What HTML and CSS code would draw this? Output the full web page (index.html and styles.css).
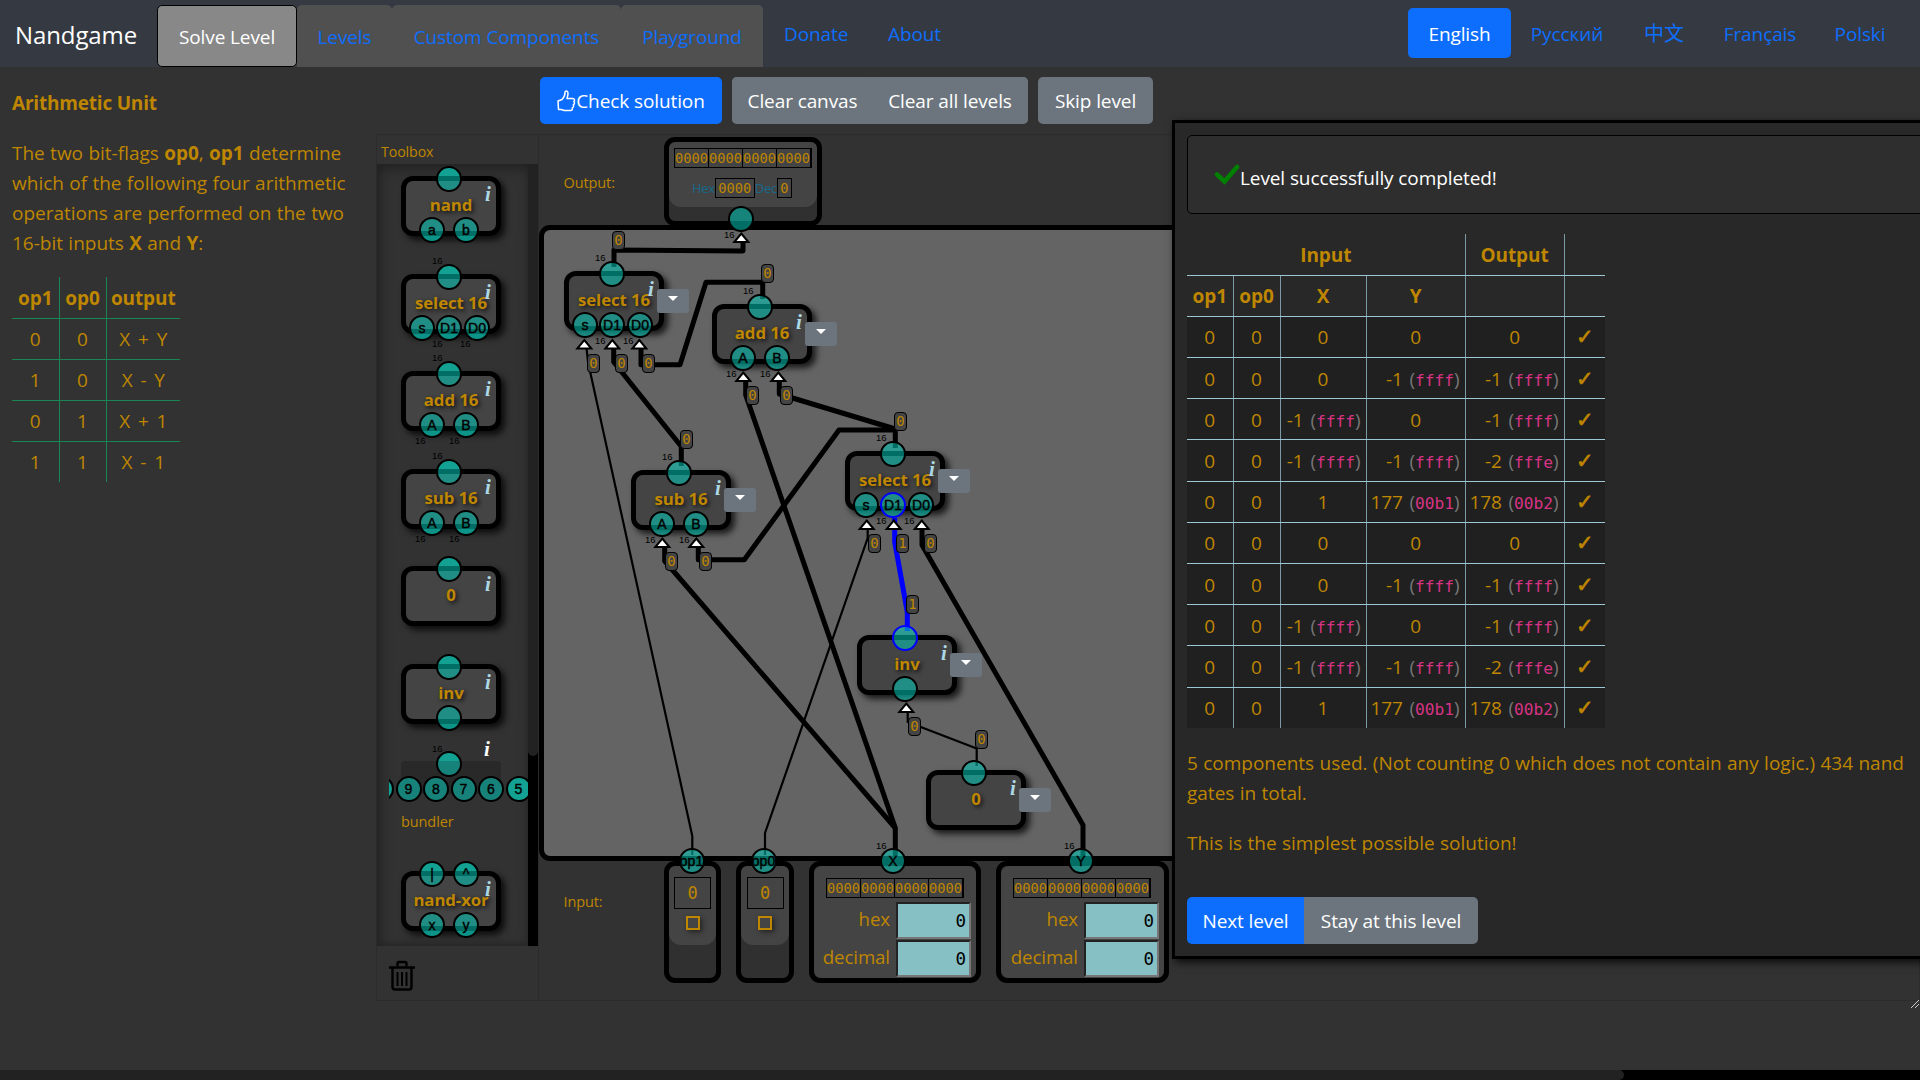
FILE: index.html
```html
<!DOCTYPE html>
<html lang="en">
<head>
<meta charset="utf-8">
<title>Nandgame</title>
<link rel="stylesheet" href="styles.css">
</head>
<body>
<header class="navbar">
  <a class="brand">Nandgame</a>
  <nav class="tabs">
    <a class="tab tab-solve active">Solve Level</a>
    <a class="tab tab-levels">Levels</a>
    <a class="tab tab-custom">Custom Components</a>
    <a class="tab tab-play">Playground</a>
  </nav>
  <nav class="links">
    <a class="link-donate">Donate</a>
    <a class="link-about">About</a>
  </nav>
  <nav class="languages">
    <a class="lang lang-en current">English</a>
    <a class="lang lang-ru">Русский</a>
    <a class="lang lang-zh">中文</a>
    <a class="lang lang-fr">Français</a>
    <a class="lang lang-pl">Polski</a>
  </nav>
</header>

<main class="page">
  <section class="intro">
    <h1>Arithmetic Unit</h1>
    <p>The two bit-flags <b>op0</b>, <b>op1</b> determine<br>which of the following four arithmetic<br>operations are performed on the two<br>16-bit inputs <b>X</b> and <b>Y</b>:</p>
    <table class="spec">
      <tr><th>op1</th><th>op0</th><th>output</th></tr>
      <tr><td>0</td><td>0</td><td>X + Y</td></tr>
      <tr><td>1</td><td>0</td><td>X - Y</td></tr>
      <tr><td>0</td><td>1</td><td>X + 1</td></tr>
      <tr><td>1</td><td>1</td><td>X - 1</td></tr>
    </table>
  </section>

  <section class="play">
    <div class="toolbar">
      <button class="btn primary btn-check"><svg width="19" height="22" viewBox="0 0 19 22" fill="none" stroke="#fff" stroke-width="1.5" stroke-linejoin="round"><path d="M1 11 L5 9.5 C7.5 7 8 5.500 8 2.500 C8 .5 10.800 .5 11 3 C11.200 5 10.500 7 10 8.500 H15.500 C18 8.500 18 11 16.800 11.500 C18 12.500 17.500 14.500 16.300 14.800 C17 16 16.500 17.500 15.300 17.800 C15.800 19.500 15 20.500 13.500 20.500 H8.500 C6.500 20.500 5.500 19.500 4 19.500 H1.500 Z"/></svg>Check solution</button>
      <div class="btn-group">
        <button class="btn btn-clear">Clear canvas</button>
        <button class="btn btn-clear-all">Clear all levels</button>
      </div>
      <button class="btn btn-skip">Skip level</button>
    </div>

    <div class="board">
      <aside class="toolbox">
        <div class="toolbox-title">Toolbox</div>
        <div class="toolbox-scroll">
          <div class="tools">
            <div class="node"><span class="label">nand</span><i>i</i><span class="pin out"></span><span class="pin in p1">a</span><span class="pin in p2">b</span></div>
            <div class="node"><span class="label">select 16</span><i>i</i><span class="pin out"></span><span class="w wo">16</span><span class="pin in t1">s</span><span class="pin in t2">D1</span><span class="pin in t3">D0</span><span class="w wt2">16</span><span class="w wt3">16</span></div>
            <div class="node"><span class="label">add 16</span><i>i</i><span class="pin out"></span><span class="w wo">16</span><span class="pin in p1">A</span><span class="pin in p2">B</span><span class="w wp1">16</span><span class="w wp2">16</span></div>
            <div class="node"><span class="label">sub 16</span><i>i</i><span class="pin out"></span><span class="w wo">16</span><span class="pin in p1">A</span><span class="pin in p2">B</span><span class="w wp1">16</span><span class="w wp2">16</span></div>
            <div class="node"><span class="label">0</span><i>i</i><span class="pin out"></span></div>
            <div class="node"><span class="label">inv</span><i>i</i><span class="pin out"></span><span class="pin in t2"></span></div>
            <div class="bundler">
              <div class="bundler-body"></div>
              <i>i</i><span class="w">16</span><span class="pin bundler-out"></span>
              <div class="bundler-pins"><span class="pin"></span><span class="pin">9</span><span class="pin">8</span><span class="pin">7</span><span class="pin">6</span><span class="pin">5</span></div>
              <div class="bundler-name">bundler</div>
            </div>
            <div class="node"><span class="label">nand-xor</span><i>i</i><span class="pin out p1">|</span><span class="pin out p2">^</span><span class="pin in p1">x</span><span class="pin in p2">y</span></div>
          </div>
          <div class="vscroll"><div class="vthumb"></div></div>
        </div>
        <div class="trash"><svg width="26" height="31" viewBox="0 0 26 31" fill="none" stroke="#000"><path stroke-width="2.400" d="M0 7.500 H26 M8.500 6 V3.500 Q8.500 2 10 2 H16 Q17.500 2 17.500 3.500 V6"/><path stroke-width="2.400" d="M3.500 8 V27 Q3.500 29.500 6 29.500 H20 Q22.500 29.500 22.500 27 V8"/><path stroke-width="2" d="M8.500 12 V26 M13 12 V26 M17.500 12 V26"/></svg></div>
      </aside>

      <div class="workspace">
        <div class="row-output">
          <span class="row-name">Output:</span>
          <div class="panel panel-out">
            <div class="panel-body">
              <div class="bits"><span>0000</span><span>0000</span><span>0000</span><span>0000</span></div>
              <div class="hexdec">Hex<span class="hex-value">0000</span>Dec<span>0</span></div>
            </div>
          </div>
        </div>

        <div class="canvas">
          <svg class="wires" width="634" height="650" viewBox="539 225 634 650" fill="none" stroke="#000" stroke-width="5" stroke-linejoin="round">
            <path d="M614 267V250L743 251V240"/>
            <path d="M613.700 348V362L681.300 446.500V466"/>
            <path d="M641 348V364.700H680L706 282.300H762.700V299"/>
            <path d="M745.700 380V395L895.300 828V856"/>
            <path d="M779.300 380V394L895.300 429V448"/>
            <path d="M664.700 547V561L895.300 828"/>
            <path d="M698.300 547V559.700H744.300L839 430H895.300"/>
            <path d="M922 528V545L1083 825V856"/>
            <g stroke-width="2.200">
              <path d="M586.500 348L588 362L692.300 836V855"/>
              <path d="M867.700 528V538L765 833V855"/>
              <path d="M907.700 712V722L976.700 748.500V766"/>
            </g>
            <path stroke="#00f" d="M894.700 518V542L907.300 612V631"/>
            <g fill="#fff" stroke-width="2" stroke-linejoin="miter">
              <path d="M741.300 233.500l7 8.500h-14Z"/>
              <path d="M584.300 340l7 8.500h-14Z"/><path d="M612.300 340l7 8.500h-14Z"/><path d="M639.300 340l7 8.500h-14Z"/>
              <path d="M743.300 372.500l7 8.500h-14Z"/><path d="M778.300 372.500l7 8.500h-14Z"/>
              <path d="M662.300 538.500l7 8.500h-14Z"/><path d="M696.300 538.500l7 8.500h-14Z"/>
              <path d="M866.700 520.500l7 8.500h-14Z"/><path d="M893.700 520.500l7 8.500h-14Z"/><path d="M921.700 520.500l7 8.500h-14Z"/>
              <path d="M906.300 703.500l7 8.500h-14Z"/>
            </g>
          </svg>

          <div class="node n-select-a"><span class="label">select 16</span><i>i</i><span class="pin out"></span><span class="w wo">16</span><span class="pin in t1">s</span><span class="pin in t2">D1</span><span class="pin in t3">D0</span><span class="w wt2">16</span><span class="w wt3">16</span><span class="menu"></span></div>
          <div class="node n-add"><span class="label">add 16</span><i>i</i><span class="pin out"></span><span class="w wo">16</span><span class="pin in p1">A</span><span class="pin in p2">B</span><span class="w wp1">16</span><span class="w wp2">16</span><span class="menu"></span></div>
          <div class="node n-sub"><span class="label">sub 16</span><i>i</i><span class="pin out"></span><span class="w wo">16</span><span class="pin in p1">A</span><span class="pin in p2">B</span><span class="w wp1">16</span><span class="w wp2">16</span><span class="menu"></span></div>
          <div class="node n-select-b"><span class="label">select 16</span><i>i</i><span class="pin out"></span><span class="w wo">16</span><span class="pin in t1">s</span><span class="pin in t2 on">D1</span><span class="pin in t3">D0</span><span class="w wt2">16</span><span class="w wt3">16</span><span class="menu"></span></div>
          <div class="node n-inv"><span class="label">inv</span><i>i</i><span class="pin out on"></span><span class="pin in t2"></span><span class="menu"></span></div>
          <div class="node n-zero"><span class="label">0</span><i>i</i><span class="pin out"></span><span class="menu"></span></div>

          <span class="pin pin-output"></span><span class="w w-output">16</span>
          <span class="pin pin-op1">op1</span>
          <span class="pin pin-op0">op0</span>
          <span class="pin pin-x">X</span><span class="w w-x">16</span>
          <span class="pin pin-y">Y</span><span class="w w-y">16</span>

          <span class="val" style="left:68px;top:1px">0</span>
          <span class="val" style="left:217px;top:34px">0</span>
          <span class="val" style="left:43px;top:124px">0</span>
          <span class="val" style="left:71px;top:124px">0</span>
          <span class="val" style="left:98px;top:124px">0</span>
          <span class="val" style="left:202px;top:156px">0</span>
          <span class="val" style="left:236px;top:156px">0</span>
          <span class="val" style="left:136px;top:200px">0</span>
          <span class="val" style="left:121px;top:322px">0</span>
          <span class="val" style="left:155px;top:322px">0</span>
          <span class="val" style="left:350px;top:182px">0</span>
          <span class="val" style="left:324px;top:304px">0</span>
          <span class="val" style="left:352px;top:304px">1</span>
          <span class="val" style="left:380px;top:304px">0</span>
          <span class="val" style="left:362px;top:365px">1</span>
          <span class="val" style="left:364px;top:487px">0</span>
          <span class="val" style="left:431px;top:500px">0</span>
        </div>

        <div class="row-input">
          <span class="row-name">Input:</span>
          <div class="panel panel-bit"><div class="panel-body"><div class="bit">0</div><div class="toggle"></div></div></div>
          <div class="panel panel-bit panel-op0"><div class="panel-body"><div class="bit">0</div><div class="toggle"></div></div></div>
          <div class="panel panel-word">
            <div class="panel-body">
              <div class="bits"><span>0000</span><span>0000</span><span>0000</span><span>0000</span></div>
              <label>hex<span class="field">0</span></label>
              <label>decimal<span class="field">0</span></label>
            </div>
          </div>
          <div class="panel panel-word panel-y">
            <div class="panel-body">
              <div class="bits"><span>0000</span><span>0000</span><span>0000</span><span>0000</span></div>
              <label>hex<span class="field">0</span></label>
              <label>decimal<span class="field">0</span></label>
            </div>
          </div>
        </div>
        <svg class="grip" width="8" height="8" viewBox="0 0 8 8" stroke="#ccc" stroke-width="1"><path d="M0 8L8 0M4 8L8 4"/></svg>
      </div>
    </div>
  </section>
</main>

<div class="dialog">
  <div class="alert"><svg width="26" height="21" viewBox="0 0 26 21" fill="none" stroke="#008000" stroke-width="4.600"><path stroke-linecap="round" d="M3 10.500L10.500 17.500L23 3"/></svg>Level successfully completed!</div>
  <table class="results">
    <colgroup><col class="c-op1"><col class="c-op"><col class="c-x"><col class="c-y"><col class="c-y"><col class="c-ok"></colgroup>
    <thead>
      <tr><th colspan="4">Input</th><th>Output</th><th></th></tr>
      <tr><th>op1</th><th>op0</th><th>X</th><th>Y</th><th></th><th></th></tr>
    </thead>
    <tbody>
      <tr><td>0</td><td>0</td><td>0</td><td>0</td><td>0</td><td>✓</td></tr>
      <tr><td>0</td><td>0</td><td>0</td><td class="r">-1 <s>(<code>ffff</code>)</s></td><td class="r">-1 <s>(<code>ffff</code>)</s></td><td>✓</td></tr>
      <tr><td>0</td><td>0</td><td class="r">-1 <s>(<code>ffff</code>)</s></td><td>0</td><td class="r">-1 <s>(<code>ffff</code>)</s></td><td>✓</td></tr>
      <tr><td>0</td><td>0</td><td class="r">-1 <s>(<code>ffff</code>)</s></td><td class="r">-1 <s>(<code>ffff</code>)</s></td><td class="r">-2 <s>(<code>fffe</code>)</s></td><td>✓</td></tr>
      <tr><td>0</td><td>0</td><td>1</td><td class="r">177 <s>(<code>00b1</code>)</s></td><td class="r">178 <s>(<code>00b2</code>)</s></td><td>✓</td></tr>
      <tr><td>0</td><td>0</td><td>0</td><td>0</td><td>0</td><td>✓</td></tr>
      <tr><td>0</td><td>0</td><td>0</td><td class="r">-1 <s>(<code>ffff</code>)</s></td><td class="r">-1 <s>(<code>ffff</code>)</s></td><td>✓</td></tr>
      <tr><td>0</td><td>0</td><td class="r">-1 <s>(<code>ffff</code>)</s></td><td>0</td><td class="r">-1 <s>(<code>ffff</code>)</s></td><td>✓</td></tr>
      <tr><td>0</td><td>0</td><td class="r">-1 <s>(<code>ffff</code>)</s></td><td class="r">-1 <s>(<code>ffff</code>)</s></td><td class="r">-2 <s>(<code>fffe</code>)</s></td><td>✓</td></tr>
      <tr><td>0</td><td>0</td><td>1</td><td class="r">177 <s>(<code>00b1</code>)</s></td><td class="r">178 <s>(<code>00b2</code>)</s></td><td>✓</td></tr>
    </tbody>
  </table>
  <p>5 components used. (Not counting 0 which does not contain any logic.) 434 nand<br>gates in total.</p>
  <p>This is the simplest possible solution!</p>
  <div class="dialog-buttons"><button class="btn primary btn-next">Next level</button><button class="btn btn-stay">Stay at this level</button></div>
</div>
<div class="hscroll"><div class="hthumb"></div></div>
</body>
</html>
```

FILE: styles.css
```css
* { box-sizing: border-box; }
html, body { margin: 0; height: 1080px; overflow: hidden; }
body {
  background: #323232;
  color: #bf8600;
  font-family: "Open Sans", "Noto Sans CJK SC", sans-serif;
  font-size: 19px;
  line-height: 30px;
  letter-spacing: -0.1px;
  display: flex;
  flex-direction: column;
  position: relative;
}
p, h1 { margin: 0; }
p { letter-spacing: 0; word-spacing: .4px; }
table { border-collapse: collapse; table-layout: fixed; }

/* navigation */
.navbar { height: 67px; flex: none; background: #353a42; display: flex; color: #0d6efd; white-space: nowrap; }
.brand { width: 157px; padding: 20px 0 0 15px; color: #fff; font-size: 24px; }
.tabs { display: flex; padding-top: 5px; }
.tab { height: 62px; padding-top: 17px; text-align: center; background: #505050; border-radius: 5px 5px 0 0; }
.tab.active { background: #888; color: #fff; border: 1px solid #000; border-radius: 5px; padding-top: 16px; }
.tab-solve { width: 140px; }
.tab-levels { width: 95px; }
.tab-custom { width: 229px; }
.tab-play { width: 142px; }
.links { display: flex; padding: 19px 0 0 21px; }
.link-donate { width: 104px; }
.languages { display: flex; margin-left: auto; padding-top: 8px; margin-right: 15px; }
.lang { height: 50px; padding-top: 11px; text-align: center; }
.lang.current { background: #0d6efd; color: #fff; border-radius: 5px; }
.lang-en { width: 103px; }
.lang-ru { width: 112px; }
.lang-zh { width: 82px; font-size: 20px; }
.lang-fr { width: 110px; }
.lang-pl { width: 90px; }

/* page columns */
.page { display: flex; flex: none; height: 1003px; }
.intro { width: 376px; flex: none; padding: 21px 0 0 12px; white-space: nowrap; }
.intro h1 { font-size: 19px; font-weight: 700; letter-spacing: -.2px; margin-bottom: 20px; }
.spec { margin-top: 19px; width: 168px; text-align: center; }
.spec th, .spec td { height: 41px; padding: 1px 0 0; border: 1px solid #198754; }
.spec td { word-spacing: 3px; }
.spec th:first-child { width: 47px; }
.spec th:nth-child(2) { width: 47px; }
.spec tr > :first-child { border-left: 0; }
.spec tr > :last-child { border-right: 0; }
.spec tr:first-child > * { border-top: 0; }
.spec tr:last-child > * { border-bottom: 0; }
.play { flex: 1; min-width: 0; display: flex; flex-direction: column; }
.toolbar { height: 67px; padding: 10px 0 0 164px; display: flex; align-items: flex-start; gap: 10px; }
.btn { height: 47px; padding: 0; border: 0; border-radius: 5px; background: #6c757d; color: #fff; font: inherit; letter-spacing: inherit; white-space: nowrap; }
.btn.primary { background: #0d6efd; }
.btn-check { width: 182px; display: flex; align-items: center; justify-content: center; gap: 0; }
.btn-group { display: flex; background: #6c757d; border-radius: 5px; }
.btn-clear { width: 140px; padding-left: 1px; }
.btn-clear-all { width: 156px; }
.btn-skip { width: 115px; }

.board { display: flex; height: 867px; border: 1px solid #2b2b2b; }
.toolbox { width: 163px; margin-left: -1px; flex: none; display: flex; flex-direction: column; border-left: 1px solid #2b2b2b; border-right: 1px solid #2b2b2b; }
.toolbox-title { height: 29px; padding: 2px 0 0 4px; font-size: 14.200px; }
.toolbox-scroll { height: 782px; display: flex; overflow: hidden; background: #323232; }
.tools { width: 151px; height: 782px; padding: 12px 0 0 24px; display: flex; flex-direction: column; gap: 37.500px; box-shadow: inset 3px 5px 12px #222, inset 0 -3px 4px #2a2a2a; }
.vscroll { width: 10px; background: #000; }
.vthumb { height: 592px; background: #222; border-radius: 0 0 5px 5px; }
.trash { padding: 14px 0 0 12px; line-height: 0; }

/* components */
.node { position: relative; width: 100px; height: 60px; flex: none; background: #444; border: 5px solid #000; border-radius: 12px; box-shadow: 4px 4px 6px rgba(0,0,0,.75); display: flex; justify-content: center; }
.label { font-weight: 700; font-size: 16.800px; line-height: 24px; margin-top: 12px; white-space: nowrap; text-shadow: 2px 2px 4px #111; }
i { position: absolute; left: 79px; top: 2px; font: italic bold 21px/22px "Liberation Serif", serif; color: #add8e6; }
.pin { position: absolute; width: 26px; height: 26px; border: 2px solid #000; border-radius: 50%; background-color: rgba(0,208,188,.53); color: #000; font: 14px/22px "Liberation Sans", sans-serif; letter-spacing: 0; -webkit-text-stroke: .4px #000; display: flex; justify-content: center; overflow: hidden; }
.pin.on { border-color: #00f; }
.pin.out { left: 30px; top: -15px; }
.pin.in { top: 36.400px; }
.pin.p1 { left: 13px; }
.pin.p2 { left: 47px; }
.pin.t1 { left: 3px; }
.pin.t2 { left: 30px; }
.pin.t3 { left: 58px; }
.tools .pin.out { background-image: linear-gradient(#12a192 8px, transparent 8px); }
.tools .pin.in { background-image: linear-gradient(transparent 16.600px, #0d9488 16.600px); }
.w { position: absolute; font: 9.500px/10px "Liberation Sans", sans-serif; letter-spacing: 0; color: #000; }
.wo { left: 26px; top: -23px; }
.wp1 { left: 9px; top: 60px; }
.wp2 { left: 43px; top: 60px; }
.wt2 { left: 26px; top: 60px; }
.wt3 { left: 54px; top: 60px; }
.menu { position: absolute; left: 88px; top: 13px; width: 32px; height: 24px; background: #6c757d; border-radius: 3px; }
.menu::after { content: ""; position: absolute; left: 11px; top: 7px; border: 5px solid transparent; border-top-color: #fff; border-bottom: 0; }

.bundler { position: relative; height: 72.400px; flex: none; }
.bundler-body { width: 100px; height: 33px; background: #292929; border-radius: 4px; }
.bundler i { left: 83px; top: -23px; color: #fff; }
.bundler .w { left: 31px; top: -17px; }
.bundler-out { left: 35px; top: -10px; background-image: linear-gradient(#12a192 8px, #17827a 8px); }
.bundler-pins { position: absolute; left: -12px; top: 14.500px; width: 139px; height: 27px; overflow: hidden; display: flex; gap: 1.500px; }
.bundler-pins .pin { position: static; flex: none; background: #17827a; }
.bundler-pins .pin:first-child { margin-left: -21px; }
.bundler-pins .pin:first-child, .bundler-pins .pin:last-child { background: #12a192; }
.bundler-name { margin-top: 13px; font-size: 14.500px; }

/* workspace */
.workspace { flex: 1; min-width: 0; display: flex; flex-direction: column; position: relative; }
.row-output { height: 90px; display: flex; padding-top: 2px; }
.row-name { width: 125px; padding-left: 24.500px; font-size: 14.500px; }
.row-output .row-name { padding-top: 31px; }
.panel { border: 5px solid #000; border-radius: 11px; background: #303030; overflow: hidden; }
.panel-body { background: #444; border-radius: 6px 6px 12px 12px; }
.panel-out { width: 158px; height: 89px; }
.panel-out .panel-body { height: 65px; padding: 6px 0 0 5px; }
.bits { display: flex; width: 138px; height: 20px; border: 1px solid #000; border-right-width: 2px; font: 13.700px/18px "DejaVu Sans Mono", monospace; letter-spacing: 0; }
.bits span { width: 34px; border-right: 1px solid #000; }
.bits span:last-child { border: 0; }
.hexdec { display: flex; margin: 10px 0 0 18px; color: #14698c; font-size: 13px; line-height: 20px; letter-spacing: -.3px; }
.hexdec span { width: 15px; height: 20px; border: 1px solid #000; color: #bf8600; font: 13.700px/18px "DejaVu Sans Mono", monospace; text-align: center; letter-spacing: 0; }
.hexdec .hex-value { width: 40px; }

.canvas { position: relative; width: 1300px; height: 636px; flex: none; background: #646464; border: 5px solid #000; border-radius: 11px; }
.wires { position: absolute; left: -5px; top: -5px; overflow: visible; }
.canvas .node { position: absolute; }
.n-select-a { left: 20px; top: 41px; }
.n-add { left: 168px; top: 74px; }
.n-sub { left: 87px; top: 240px; }
.n-select-b { left: 301px; top: 221px; }
.n-inv { left: 313px; top: 405px; }
.n-zero { left: 382px; top: 540px; }
.pin-output { left: 184px; top: -24px; }
.w-output { left: 180px; top: 0; }
.pin-op1 { left: 134.500px; top: 618px; }
.pin-op0 { left: 206.500px; top: 618px; }
.pin-x { left: 336px; top: 618px; }
.pin-y { left: 524px; top: 618px; }
.w-x { left: 332px; top: 611px; }
.w-y { left: 520px; top: 611px; }
.val { position: absolute; width: 13px; height: 19px; background: #444; border: 1px solid #000; border-radius: 4px; font: 14px/17px "DejaVu Sans Mono", monospace; letter-spacing: 0; display: flex; justify-content: center; }

.row-input { display: flex; height: 139px; }
.row-input .row-name { padding-top: 26px; flex: none; }
.row-input .panel { height: 122px; flex: none; }
.panel-bit { width: 57px; margin-right: 15px; }
.row-input .panel-op0 { width: 58px; }
.panel-bit .panel-body { height: 79px; padding-top: 11px; display: flex; flex-direction: column; align-items: center; }
.bit { width: 37px; height: 32px; border: 1px solid #000; font: 17px/30px "DejaVu Sans Mono", monospace; text-align: center; letter-spacing: 0; }
.toggle { width: 14px; height: 14px; margin-top: 7px; border: 2px solid #bf8600; box-shadow: 2px 2px 5px #222; }
.panel-word { width: 172px; margin-right: 15px; }
.row-input .panel-y { width: 173px; }
.panel-word .panel-body { height: 112px; padding-top: 12px; display: flex; flex-direction: column; border-radius: 8px; }
.panel-word .bits { margin: 0 0 4px 12px; }
label { display: flex; justify-content: flex-end; padding-right: 5px; height: 39px; line-height: 34px; font-size: 18.700px; }
.field { width: 75px; height: 37px; margin-left: 6px; background: #86c0c4; border: 2px solid; border-color: #222 #777 #777 #222; color: #000; text-align: right; padding-right: 3px; font: 17.500px/34px "DejaVu Sans Mono", monospace; letter-spacing: 0; }
.grip { position: absolute; right: 0; bottom: -8px; }

/* result dialog, over the workspace */
.dialog { position: absolute; left: 1172px; top: 120px; width: 760px; height: 839px; border: 3px solid #000; background: #282828; box-shadow: 3px 3px 8px rgba(0,0,0,.8); padding: 12px 0 0 12px; white-space: nowrap; }
.alert { height: 79px; border: 1px solid #000; border-radius: 5px; background: #2e2e2e; color: #fff; padding: 27px 0 0 26px; display: flex; }
.alert svg { margin-top: 1px; flex: none; }
.results { margin-top: 20px; width: 418px; text-align: center; }
.c-op1 { width: 46px; }
.c-op { width: 47px; }
.c-x { width: 86px; }
.c-y { width: 99px; }
.c-ok { width: 41px; }
.results th, .results td { height: 41.200px; padding: 1px 0 0; border: 1px solid #9cc8d5; border-left-color: #7a9ba5; border-right-color: #7a9ba5; }
.results tr > :first-child { border-left: 0; }
.results tr > :last-child { border-right: 0; }
.results thead tr:first-child > * { border-top: 0; }
.results tbody tr:last-child > * { border-bottom: 0; }
.results tbody { background: #202020; }
.results .r { text-align: right; padding-right: 5px; word-spacing: 2px; }
.results td:last-child { font-family: "DejaVu Sans", sans-serif; font-size: 21px; line-height: 28px; -webkit-text-stroke: .6px #bf8600; }
s { text-decoration: none; color: #777; }
code { font: 16.200px "DejaVu Sans Mono", monospace; letter-spacing: 0; color: #d63384; }
.dialog p { margin-top: 20px; }
.dialog-buttons { display: flex; margin-top: 39px; }
.btn-next { width: 117px; border-radius: 5px 0 0 5px; }
.btn-stay { width: 174px; border-radius: 0 5px 5px 0; }

/* horizontal page scrollbar */
.hscroll { height: 10px; background: #000; }
.hthumb { width: 1624px; height: 10px; background: #222; border-radius: 0 5px 5px 0; }
```
